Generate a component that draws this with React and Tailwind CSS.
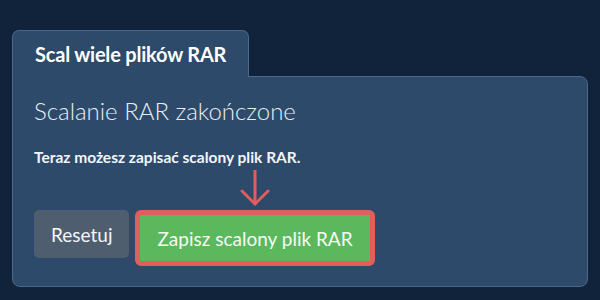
import React from "react";

export default function App() {
  return (
    <div
      className="w-[600px] h-[300px] bg-[#10233a] pt-[30px] px-[12px] overflow-hidden"
      style={{ fontFamily: "Lato, 'Noto Sans', sans-serif" }}
    >
      <div className="relative z-10 -mb-px w-[237px] h-[47px] bg-[#2d4a6b] border-t border-x border-[#4c6788] rounded-t-[7px] flex items-center pl-[22px]">
        <span className="text-[20px] font-bold text-white tracking-[-0.2px]">Scal wiele plików RAR</span>
      </div>
      <div className="w-[576px] h-[211px] bg-[#2d4a6b] border border-[#4c6788] rounded-[8px] rounded-tl-none px-[21px] pt-[19px]">
        <h2 className="text-[24px] font-light text-[#e8edf3] leading-[30px] whitespace-nowrap">Scalanie RAR zakończone</h2>
        <p className="mt-[21px] text-[15.5px] font-bold text-[#f2f5f8] leading-[20px] whitespace-nowrap">Teraz możesz zapisać scalony plik RAR.</p>
        <div className="mt-[43px] flex items-start gap-[6px]">
          <button className="h-[48px] px-[17px] rounded-[5px] bg-[#4e5e6f] text-[#f4f6f8] text-[19px] font-normal leading-none">Resetuj</button>
          <div className="relative">
            <svg className="absolute left-1/2 -translate-x-1/2 bottom-full mb-[3px]" width="32" height="38" viewBox="0 0 32 38">
              <path d="M16 1 V35" stroke="#df605a" strokeWidth="3" fill="none" />
              <path d="M3 22 L16 35 L29 22" stroke="#df605a" strokeWidth="3" fill="none" strokeLinecap="round" strokeLinejoin="miter" />
            </svg>
            <button className="h-[56px] px-[17px] rounded-[6px] bg-[#5cb85c] border-[5px] border-[#df605a] text-[#f7faf7] text-[19px] font-normal leading-none whitespace-nowrap">Zapisz scalony plik RAR</button>
          </div>
        </div>
      </div>
    </div>
  );
}
